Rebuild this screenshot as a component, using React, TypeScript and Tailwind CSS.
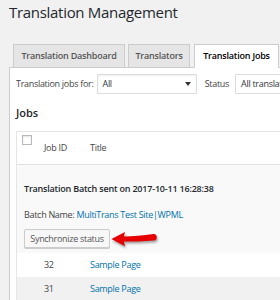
import React from 'react';

const tabs = [
  { label: 'Translation Dashboard', width: 'w-[112px]', ml: 'ml-0', active: false },
  { label: 'Translators', width: 'w-[62px]', ml: 'ml-[3px]', active: false },
  { label: 'Translation Jobs', width: 'w-[85px]', ml: 'ml-[4px]', active: true },
];

const rows = [
  { id: '32', title: 'Sample Page', bg: 'bg-white' },
  { id: '31', title: 'Sample Page', bg: 'bg-[#f1f1f1]' },
];

function Caret() {
  return (
    <svg width="6" height="4" viewBox="0 0 6 4" className="shrink-0">
      <path d="M0 0 L6 0 L3 4 Z" fill="#333" />
    </svg>
  );
}

function RedArrow() {
  return (
    <svg
      width="50"
      height="18"
      viewBox="0 0 50 18"
      className="ml-[1px] shrink-0 drop-shadow-[1px_2px_1px_rgba(0,0,0,0.35)]"
    >
      <path
        d="M0.5 9 L14 2 L12.8 6.6 C22 6.3 32 5.4 42.5 4 C46.5 3.6 47 10.2 43 10.6 C32 11.6 22 11.6 12.8 11.6 L14 16.2 Z"
        fill="#e60000"
      />
    </svg>
  );
}

export default function App() {
  return (
    <div className="w-[280px] h-[300px] overflow-hidden bg-[#f1f1f1] text-[#444] font-['Open_Sans','Noto_Sans',sans-serif]">
      {/* page title */}
      <div className="h-[44px] pl-[9px] pt-[2px]">
        <h1 className="text-[15px] leading-[20px] tracking-[-0.3px] text-[#23282d] whitespace-nowrap">
          Translation Management
        </h1>
      </div>

      {/* tabs */}
      <div className="relative z-10 -mb-px flex h-[24px] pl-[13px]">
        {tabs.map((t) => (
          <div
            key={t.label}
            className={`${t.width} ${t.ml} flex shrink-0 items-center justify-center border border-[#ccc] text-[9px] font-semibold tracking-[-0.2px] whitespace-nowrap ${
              t.active ? 'bg-white border-b-white text-[#000]' : 'bg-[#e5e5e5] text-[#555]'
            }`}
          >
            {t.label}
          </div>
        ))}
      </div>

      {/* panel */}
      <div className="ml-[9px] w-[320px] border border-[#ccc] bg-white pt-[6px] h-[260px]">
        <div className="flex h-[20px] items-center pl-[6px] text-[9px] tracking-[-0.3px] whitespace-nowrap">
          <span>Translation jobs for:</span>
          <div className="ml-[4px] flex h-[20px] w-[127px] items-center justify-between border border-[#ddd] bg-white pl-[4px] pr-[5px] text-[#32373c] shadow-[inset_0_1px_2px_rgba(0,0,0,0.07)]">
            <span>All</span>
            <Caret />
          </div>
          <span className="ml-[8px]">Status</span>
          <div className="ml-[6px] flex h-[20px] w-[120px] items-center border border-[#ddd] bg-white pl-[5px] text-[#32373c]">
            <span>All translation jobs</span>
          </div>
        </div>

        <h2 className="mt-[12px] h-[14px] pl-[6px] text-[11px] leading-[14px] font-semibold text-[#23282d]">
          Jobs
        </h2>

        {/* table */}
        <div className="ml-[6px] mt-[11px] w-[320px] border border-[#e5e5e5] text-[9px] tracking-[-0.3px]">
          <div className="flex h-[33px] border-b border-[#e1e1e1] bg-white">
            <div className="w-[27px] shrink-0 pl-[5px] pt-[3px]">
              <div className="h-[10px] w-[10px] border border-[#b4b9be] bg-white shadow-[inset_0_1px_2px_rgba(0,0,0,0.1)]" />
            </div>
            <div className="flex w-[46px] shrink-0 items-center">Job ID</div>
            <div className="flex items-center">Title</div>
          </div>

          <div className="h-[88px] bg-[#f9f9f9] pl-[7px] pt-[18px]">
            <div className="h-[12px] leading-[12px] font-semibold tracking-[-0.2px] text-[#23282d] whitespace-nowrap">
              Translation Batch sent on 2017-10-11 16:28:38
            </div>
            <div className="mt-[14px] h-[12px] leading-[12px] whitespace-nowrap">
              Batch Name: <span className="text-[#0073aa]">MultiTrans Test Site|WPML</span>
            </div>
            <div className="mt-[8px] flex items-center">
              <div className="flex h-[19px] w-[86px] items-center justify-center rounded-[2px] border border-[#ccc] bg-[#f7f7f7] text-[#555] shadow-[0_1px_0_#ccc] whitespace-nowrap">
                Synchronize status
              </div>
              <RedArrow />
            </div>
          </div>

          {rows.map((r) => (
            <div key={r.id} className={`flex h-[24px] items-center ${r.bg}`}>
              <div className="w-[27px] shrink-0" />
              <div className="w-[46px] shrink-0">{r.id}</div>
              <div className="text-[#0073aa]">{r.title}</div>
            </div>
          ))}
        </div>
      </div>
    </div>
  );
}
